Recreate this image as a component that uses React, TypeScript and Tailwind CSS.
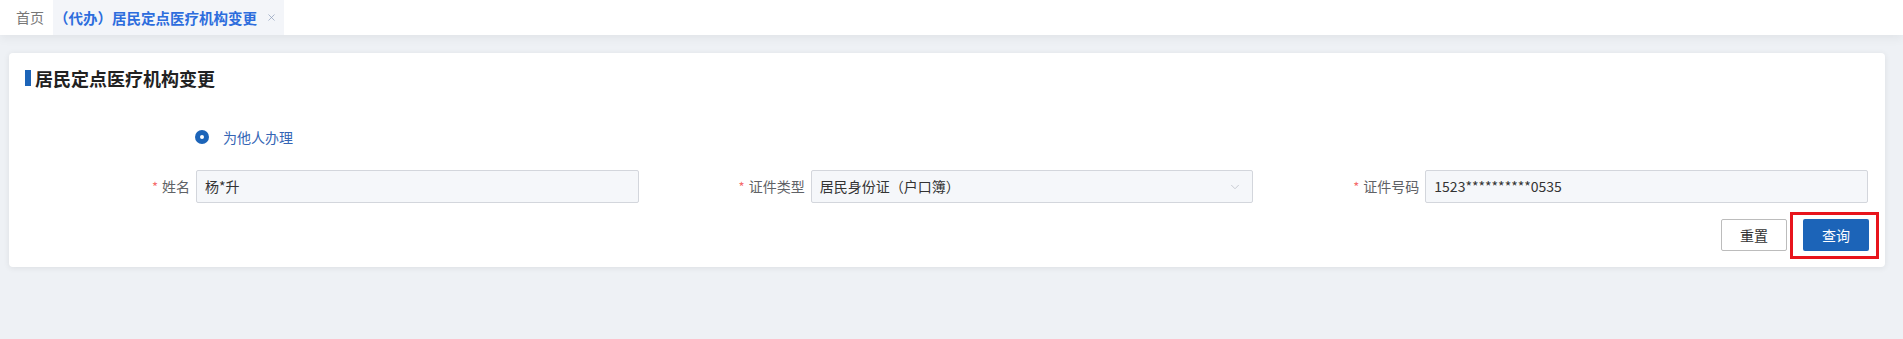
import { ChevronDown, X } from "lucide-react";

const font = { fontFamily: '"Noto Sans CJK SC", "Noto Sans", "Liberation Sans", sans-serif' };

function Field({ label, children }: { label: string; children: React.ReactNode }) {
  return (
    <div className="flex items-center">
      <div className="w-[171px] shrink-0 pr-[6px] flex justify-end items-center text-[14px] text-[#606266]">
        <span className="text-[#f56c6c] mr-[4px] text-[13px]">*</span>
        {label}
      </div>
      {children}
    </div>
  );
}

function ReadInput({ value }: { value: string }) {
  return (
    <div className="flex-1 h-[33px] mr-[1px] flex items-center px-[8px] bg-[#f5f7fa] border border-[#d3d6dc] rounded-[2px] text-[14px] text-[#333]">
      {value}
    </div>
  );
}

export default function App() {
  return (
    <div style={font} className="w-[1903px] h-[339px] bg-[#eef1f5] overflow-hidden">
      {/* Tabs */}
      <div className="h-[35px] bg-white flex items-stretch shadow-[0_3px_10px_rgba(0,0,0,0.06)] relative z-10">
        <div className="pl-[16px] pr-[9px] flex items-center text-[14px] text-[#777]">首页</div>
        <div className="w-[231px] bg-[#f3f5f9] pl-[1px] flex items-center">
          <span className="text-[14.5px] font-semibold text-[#2d6ddd]">（代办）居民定点医疗机构变更</span>
          <X size={11} strokeWidth={1.5} className="ml-[9px] text-[#8a9ab8]" />
        </div>
      </div>

      {/* Card */}
      <div className="ml-[9px] mr-[18px] mt-[18px] bg-white rounded-[4px] shadow-[0_1px_6px_rgba(0,0,0,0.08)] px-[16px] pt-[17px] pb-[16px]">
        <div className="h-[16px] flex items-center gap-[4px]">
          <div className="w-[6px] h-[16px] bg-[#1c64b8]" />
          <span className="text-[18px] font-bold text-[#222] leading-[16px]">居民定点医疗机构变更</span>
        </div>

        <div className="mt-[41px] h-[20px] pl-[170px] flex items-center gap-[14px]">
          <div className="w-[14px] h-[14px] rounded-full bg-[#1c64b8] flex items-center justify-center">
            <div className="w-[4px] h-[4px] rounded-full bg-white" />
          </div>
          <span className="text-[14px] text-[#3565b5]">为他人办理</span>
        </div>

        <div className="mt-[23px] grid grid-cols-3">
          <Field label="姓名">
            <ReadInput value="杨*升" />
          </Field>
          <Field label="证件类型">
            <div className="flex-1 h-[33px] mr-[1px] flex items-center justify-between pl-[8px] pr-[10px] bg-[#f5f7fa] border border-[#d3d6dc] rounded-[2px] text-[14px] text-[#333]">
              <span>居民身份证（户口簿）</span>
              <ChevronDown size={14} strokeWidth={1.5} className="text-[#c0c4cc]" />
            </div>
          </Field>
          <Field label="证件号码">
            <ReadInput value="1523**********0535" />
          </Field>
        </div>

        <div className="mt-[16px] flex justify-end gap-[16px]">
          <button className="w-[66px] h-[32px] border border-[#bcbcbc] rounded-[2px] bg-white text-[14px] text-[#333]">
            重置
          </button>
          <div className="relative">
            <button className="w-[66px] h-[32px] rounded-[2px] bg-[#1c64b8] text-[14px] text-white">
              查询
            </button>
            <div className="absolute -left-[13px] -right-[10px] -top-[7px] -bottom-[8px] border-[3px] border-[#e8141c]" />
          </div>
        </div>
      </div>
    </div>
  );
}
